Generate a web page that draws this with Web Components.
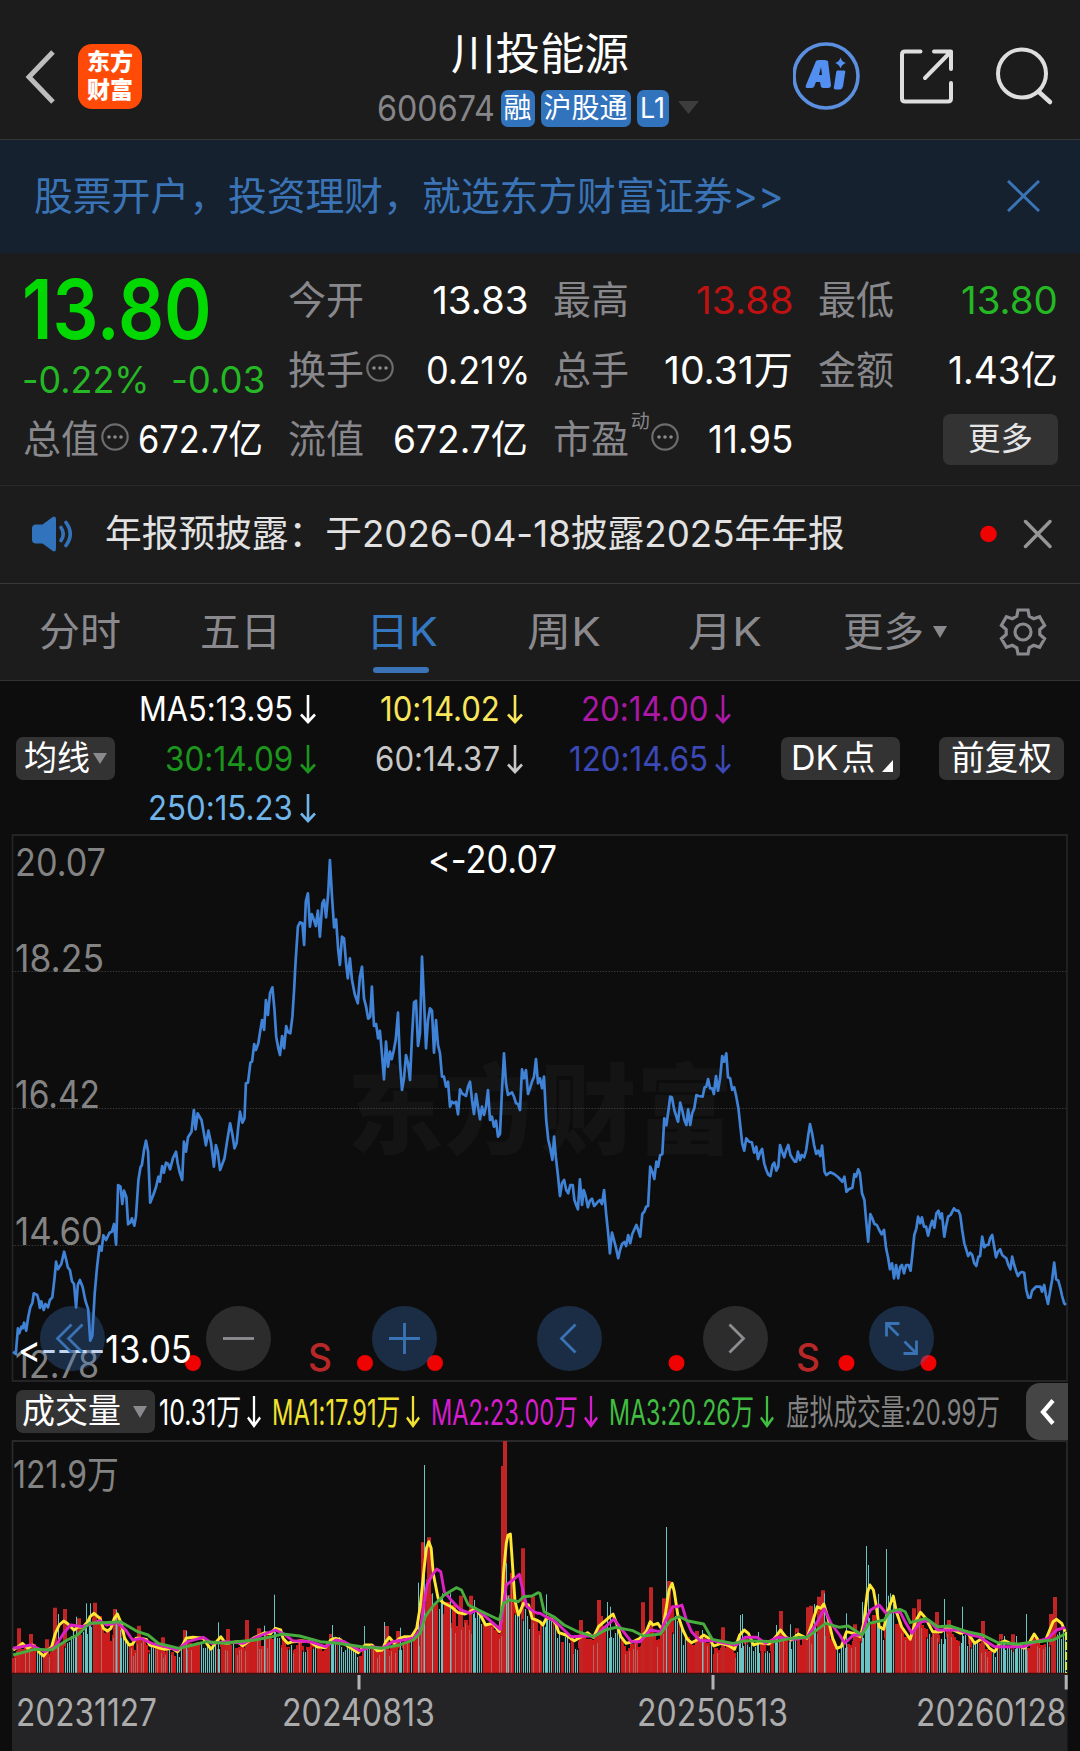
<!DOCTYPE html>
<html lang="zh-CN">
<head>
<meta charset="utf-8">
<title>川投能源 600674</title>
<style>
html,body{margin:0;background:#0d0d0d}
body{width:1080px;height:1751px;overflow:hidden;font-family:Inter,"Noto Sans CJK SC",sans-serif;font-feature-settings:"calt" 0;color:#fff}
</style>
</head>
<body>
<stock-page></stock-page>
<script>
const define=(name,html,init)=>customElements.define(name,class extends HTMLElement{
  constructor(){super();this.attachShadow({mode:'open'});}
  connectedCallback(){
    if(this.shadowRoot.firstChild)return;
    const t=document.createElement('template');
    t.innerHTML=html;
    this.shadowRoot.append(t.content.cloneNode(true));
    if(init)init.call(this,this.shadowRoot);
  }
});

/* ---------- page shell ---------- */
define('stock-page',`<style>:host{display:flex;flex-direction:column;width:1080px;height:1751px;overflow:hidden}</style>
<stock-header></stock-header>
<promo-banner></promo-banner>
<quote-panel></quote-panel>
<notice-bar></notice-bar>
<period-tabs></period-tabs>
<ma-legend></ma-legend>
<price-chart></price-chart>
<volume-legend></volume-legend>
<volume-chart></volume-chart>`);

/* ---------- header ---------- */
define('stock-header',`<style>
:host{display:flex;box-sizing:border-box;height:140px;background:#1c1c1c;border-bottom:1px solid #363638;padding:0 25px}
svg{display:block}
.l{display:flex;align-items:center;gap:22px;width:330px;height:139px;box-sizing:border-box;padding-top:14px}
.logo{width:64px;height:65px;border-radius:14px;background:#ff4a08;display:flex;flex-direction:column;align-items:center;justify-content:center;font-weight:800;font-size:23px;line-height:26px}
.m{display:flex;flex-direction:column;align-items:center;width:360px;margin-left:5px}
.t{margin-top:28px;font-size:44px;line-height:50px;height:50px}
.s{display:flex;align-items:center;gap:6px;margin-top:5px;height:50px;margin-left:-4px;color:#86868a;font-size:35px}
.b{height:37px;border-radius:7px;background:#3273be;color:#fff;display:flex;align-items:center;justify-content:center;font-size:28px}
.b t-fit{margin-top:2px}
.r{display:flex;align-items:center;width:262px;margin-left:auto;padding-top:12px;height:139px;box-sizing:border-box}
</style>
<div class="l"><svg width="31" height="54" fill="none" stroke="#bdbdbd" stroke-width="5"><path d="M28 2 4 27 28 52"/></svg>
<div class="logo"><t-fit w="46">东方</t-fit><t-fit w="46">财富</t-fit></div></div>
<div class="m"><div class="t"><t-fit w="178">川投能源</t-fit></div>
<div class="s"><t-fit w="118">600674</t-fit><span class="b" style="width:34px"><t-fit w="28">融</t-fit></span><span class="b" style="width:90px"><t-fit w="84">沪股通</t-fit></span><span class="b" style="width:32px"><t-fit w="25">L1</t-fit></span>
<svg width="22" height="16" style="margin-left:3px"><path d="M0 1h21L10.500 14z" fill="#3d3d3f"/></svg></div></div>
<div class="r"><svg width="262" height="74" fill="none" stroke="#dedede" stroke-width="4" stroke-linecap="round">
<circle cx="33" cy="37" r="32" stroke="#5b8fe0" stroke-width="3.600"/>
<g fill="#528ff0" stroke="none"><path fill-rule="evenodd" d="M23 22q1-1 3-1h6l3 1 3 24q0 3-3 3h-5l-2-1-1-5h-4l-2 5q-1 1-3 1h-4q-2 0-1-3zM26 36h3l-1-8z"/><path d="M44 31.500h7q2 0 1 3l-2 13q-1 3-3 3h-4q-3 0-2-3l2-13q0-2 1-3z"/><path d="M47.500 18.500q1.500 4.500 5.500 5.500-4 1-5.500 5.500-1.500-4.500-5.500-5.500 4-1 5.500-5.500z"/></g>
<path d="M127.500 12.500H112q-3 0-3 3v44q0 3 3 3h43q3 0 3-3V44M141 12.500h17V30M157.500 13 132 39" stroke-linejoin="round"/>
<circle cx="229" cy="34.500" r="24"/><path d="M246.500 53.500 257 63" stroke-width="4.500"/>
</svg></div>`);

define('promo-banner',`<style>
:host{display:flex;align-items:center;justify-content:space-between;box-sizing:border-box;height:113px;background:#15212f;color:#3b74b6;font-size:39px;padding:0 40px 1px 34px}
</style><t-fit w="750">股票开户，投资理财，就选东方财富证券&gt;&gt;</t-fit>
<svg width="33" height="32" stroke="#3b74b6" stroke-width="3"><path d="M1 1 32 31M32 1 1 31"/></svg>`);

/* ---------- quote ---------- */
define('more-dots',`<style>:host{display:inline-block;width:28px;height:28px;margin-top:-4px}svg{display:block}</style>
<svg width="28" height="28"><circle cx="14" cy="14" r="12.700" fill="none" stroke="#6c6c6e" stroke-width="2.200"/><g fill="#8a8a8d"><circle cx="8" cy="14" r="1.800"/><circle cx="14" cy="14" r="1.800"/><circle cx="20" cy="14" r="1.800"/></g></svg>`);

define('quote-cell',`<style>
:host{display:flex;height:69.800px;align-items:center;justify-content:space-between;color:var(--c,#fff);font-size:38.500px;font-weight:420}
.k{display:flex;align-items:center;gap:2px;color:#88888c;font-weight:400;margin-left:-1px}
</style><span class="k"><slot name="k"></slot></span><slot></slot>`);

define('quote-panel',`<style>
:host{display:flex;gap:25.600px;box-sizing:border-box;height:233px;background:#1c1c1c;border-bottom:1px solid #29292b;padding:12px 22px 0 24px}
.c{width:239.300px;flex:none}
.p{height:90px;display:flex;align-items:center;font-size:82px;font-weight:600;color:#02d902;margin-left:-2px}
.d{height:49.600px;display:flex;align-items:center;gap:21px;font-size:37px;color:#25b825;margin-left:-2px}
.m{display:flex;height:69.600px;align-items:center;justify-content:flex-end}
.m span{display:flex;align-items:center;justify-content:center;width:115px;height:51px;border-radius:7px;background:#333;color:#e6e6e6;font-size:32px}
sup{font-size:19px;line-height:20px;align-self:flex-start;margin:-4px -1px 0 0}
</style>
<div class="c"><div class="p"><t-fit w="190">13.80</t-fit></div><div class="d"><t-fit w="128">-0.22%</t-fit><t-fit w="94">-0.03</t-fit></div>
<quote-cell><t-fit slot="k" w="76">总值</t-fit><more-dots slot="k"></more-dots><t-fit w="125">672.7亿</t-fit></quote-cell></div>
<div class="c"><quote-cell><t-fit slot="k" w="76">今开</t-fit><t-fit w="96">13.83</t-fit></quote-cell>
<quote-cell><t-fit slot="k" w="76">换手</t-fit><more-dots slot="k"></more-dots><t-fit w="104" style="margin-right:-2px">0.21%</t-fit></quote-cell>
<quote-cell><t-fit slot="k" w="76">流值</t-fit><t-fit w="135">672.7亿</t-fit></quote-cell></div>
<div class="c"><quote-cell style="--c:#c01212"><t-fit slot="k" w="76">最高</t-fit><t-fit w="97">13.88</t-fit></quote-cell>
<quote-cell><t-fit slot="k" w="76">总手</t-fit><t-fit w="129">10.31万</t-fit></quote-cell>
<quote-cell><t-fit slot="k" w="76">市盈</t-fit><sup slot="k">动</sup><more-dots slot="k"></more-dots><t-fit w="85">11.95</t-fit></quote-cell></div>
<div class="c"><quote-cell style="--c:#25b825"><t-fit slot="k" w="76">最低</t-fit><t-fit w="97">13.80</t-fit></quote-cell>
<quote-cell><t-fit slot="k" w="76">金额</t-fit><t-fit w="110">1.43亿</t-fit></quote-cell>
<div class="m"><span><t-fit w="65">更多</t-fit></span></div></div>`);

/* ---------- notice ---------- */
define('notice-bar',`<style>
:host{display:flex;align-items:center;box-sizing:border-box;height:98px;background:#1c1c1c;border-bottom:1px solid #38383a;padding:0 28px 1px 32px;color:#e2e2e2;font-size:37px}
svg{display:block;flex:none}.t{margin-left:31px;flex:1}
</style>
<svg width="42" height="36" fill="none" stroke="#3273be" stroke-width="3.600" stroke-linecap="round"><path d="M4 8.500h6.500L20 1.500q4-2.500 4 2v29q0 4.500-4 2l-9.500-7H4q-4 0-4-4v-11q0-4 4-4z" fill="#3273be" stroke="none"/><path d="M29 11.500q4.500 6.500 0 13"/><path d="M34 6.500q8.500 11.500 0 23"/></svg>
<span class="t"><t-fit w="740">年报预披露：于2026-04-18披露2025年年报</t-fit></span>
<svg width="72" height="30"><circle cx="8.500" cy="15" r="8.300" fill="#ee0202"/><path d="M45.500 2.500 70 27.500M70 2.500 45.500 27.500" stroke="#969696" stroke-width="3.400" stroke-linecap="round"/></svg>`);

/* ---------- tabs ---------- */
define('period-tabs',`<style>
:host{display:flex;align-items:center;box-sizing:border-box;height:97px;background:#1c1c1c;border-bottom:1px solid #323234;padding-left:39px;color:#8a8a8e;font-size:40px}
.a{color:#3578c2;display:flex;flex-direction:column;align-items:flex-start}
.a::after{content:"";height:6px;width:56px;border-radius:3px;background:#3b74b6;margin:11px 0 -17px 7px}
svg{display:block;flex:none}
</style>
<t-fit w="82">分时</t-fit><t-fit w="81" style="margin-left:79px">五日</t-fit>
<span class="a" style="margin-left:85px"><t-fit w="72">日K</t-fit></span>
<t-fit w="74" style="margin-left:89px">周K</t-fit><t-fit w="74" style="margin-left:87px">月K</t-fit>
<t-fit w="81" style="margin-left:81px">更多</t-fit><svg width="15" height="12" style="margin-left:9px"><path d="M0 0h14L7 12z" fill="#8a8a8e"/></svg>
<svg id="g" width="50" height="50" viewBox="-25 -25 50 50" style="margin-left:50px" fill="none" stroke="#8a8a8e" stroke-width="3.200"><circle r="8"/></svg>`,function(r){
  const p=[];
  for(let i=0;i<6;i++){
    const a=i*Math.PI/3,c=Math.cos(a),s=Math.sin(a);
    for(const [x,y] of [[-6.2,-15.8],[-5,-22],[5,-22],[6.2,-15.8]])p.push((x*c-y*s).toFixed(1)+' '+(x*s+y*c).toFixed(1));
  }
  const e=document.createElementNS('http://www.w3.org/2000/svg','path');
  e.setAttribute('d','M'+p.join('L')+'z');r.getElementById('g').append(e);
});

/* ---------- moving-average legend ---------- */
define('down-arrow',`<style>:host{display:inline-block;width:16px;height:29px}svg{display:block;width:100%;height:100%}</style>
<svg viewBox="0 0 16 29" preserveAspectRatio="none" fill="none" stroke="currentColor" stroke-width="2.600"><path d="M8 0v27M1 19.500l7 7.500 7-7.500"/></svg>`);
define('ma-legend',`<style>
:host{display:flex;box-sizing:border-box;height:151px;background:#0d0d0d;padding-left:16px;align-items:center;font-size:34px}
.g{display:grid;grid-template-columns:201px 207px 208px;grid-auto-rows:49.200px;margin-top:5px}
.i{display:flex;align-items:center;justify-content:flex-end;gap:7px}
.b{display:flex;align-items:center;justify-content:center;height:43px;background:#333;border-radius:7px;margin-top:3px;gap:3px}
svg{display:block}
</style>
<span class="b" style="width:99px"><t-fit w="66">均线</t-fit><svg width="14" height="12"><path d="M0 1h14L7 12z" fill="#8a8a8e"/></svg></span>
<div class="g">
<div class="i"><t-fit w="154">MA5:13.95</t-fit><down-arrow></down-arrow></div>
<div class="i" style="color:#f8e65c"><t-fit w="120">10:14.02</t-fit><down-arrow></down-arrow></div>
<div class="i" style="color:#ab18a6"><t-fit w="127">20:14.00</t-fit><down-arrow></down-arrow></div>
<div class="i" style="color:#1b951b"><t-fit w="128">30:14.09</t-fit><down-arrow></down-arrow></div>
<div class="i" style="color:#c8c8c8"><t-fit w="125">60:14.37</t-fit><down-arrow></down-arrow></div>
<div class="i" style="color:#3b48b6"><t-fit w="139">120:14.65</t-fit><down-arrow></down-arrow></div>
<div class="i" style="color:#70b5ea"><t-fit w="145">250:15.23</t-fit><down-arrow></down-arrow></div>
</div>
<span class="b" style="width:119px;margin-left:50px"><t-fit w="84">DK&hairsp;点</t-fit><svg width="12" height="12" style="margin:16px -3px 0 3px"><path d="M12 0v12H1z" fill="#fff"/></svg></span>
<span class="b" style="width:125px;margin-left:39px"><t-fit w="101">前复权</t-fit></span>`);

/* ---------- price chart ---------- */
const PRICE_A='38 815 46 822 52 745 56 760 62 740 66 745 70 728 76 752 82 712 88 682 94 668 98 640 108 645 112 660 116 684 120 664 127 690 132 672 139 682 145 660 152 652 158 598 163 545 168 568 178 552 186 515 192 538 197 562 203 570 209 604 215 612 221 682 226 615 232 600 240 622 248 662 256 688 262 782 268 768 275 640 282 560 289 498 295 512 300 466 308 480 318 458 325 455 331 432 337 494 343 315 350 320 355 372 360 332 367 352 372 433 378 428 383 415 390 437 395 408 402 300 408 262 412 255 418 210 424 182 430 215 436 368 445 345 453 322 460 290 464 305 471 258 476 278 482 248 488 252 494 268 502 235 511 215 516 250 522 278 529 300 534 185 540 215 546 172 556 155 563 90 568 148 574 100 585 120 592 160 598 196 605 152 613 190 621 260 627 195 632 215 639 270 652 235 660 180 668 130 675 165 681 205 687 190 692 140 697 95 704 128 710 115';
const PRICE_B='714 760 720 758 727 698 732 695 738 642 743 660 750 640 756 600 761 570 767 600 772 510 778 555 784 490 791 472 797 540 802 620 808 655 813 675 819 618 825 655 831 588 836 606 843 610 849 560 854 480 858 400 865 290 871 277 878 280 883 345 888 215 894 190 900 290 905 252 911 268 917 288 923 242 929 320 936 220 941 210 947 262 953 190 958 90 964 200 970 292 976 268 982 360 987 405 993 320 999 325 1005 400 1010 445 1016 385 1022 450 1030 492 1039 520 1045 440 1051 410 1057 505 1063 530 1069 566 1075 560 1080 470 1086 588 1092 582 1098 625 1103 602 1109 670 1115 748';
const PRICE_C='138 335 144 410 150 365 155 388 161 362 167 330 174 248 180 400 186 480 192 445 198 375 204 400 210 450 216 320 222 217 228 212 234 348 240 310 246 80 252 210 258 355 264 270 270 235 276 242 282 368 288 270 294 345 300 370 306 440 312 440 318 470 324 455 330 530 336 515 342 520 348 515 354 553 360 478 366 490 378 498 384 470 390 455 396 510 402 552 408 492 414 530 420 568 426 530 432 555 438 530 444 480 450 570 456 560 462 590 468 572 474 620 480 612 486 480 492 370 498 460 504 495 516 487 522 500 528 520 534 522 540 540 546 418 552 445 558 420 564 492 570 475 576 455 582 440 588 387 594 460 600 445 606 475 612 440';
const PRICE_D='18 360 24 420 30 445 36 480 41 410 46 470 52 525 58 588 64 550 70 540 76 570 82 580 88 555 95 555 100 600 105 615 110 628 116 538 122 615 127 570 133 590 139 622 145 602 151 596 157 618 163 612 168 605 174 600 180 612 186 570 192 640 198 700 203 760 209 698 215 720 221 745 227 775 232 752 238 732 245 726 250 738 256 705 262 730 268 702 274 688 280 675 285 690 291 710 297 642 303 635 308 620 314 618 320 500 326 515 332 537 338 485 343 500 349 465 355 463 361 355 367 376 373 330 378 290 383 292 390 330 396 350 401 365 407 308 413 330 419 360 425 375 430 328 436 375 442 340 448 325 454 285 460 288 472 290 478 262 483 260 488 237 494 265 500 265 505 282 511 228 517 272 523 235 529 168 535 185 541 160 546 232 552 235 558 270 564 262 570 290 576 325 582 380 587 430 593 452 599 415 607 425 615 427 622 458 628 440 633 477 640 455 645 447 651 490 657 510 663 524 669 528 675 495 680 488 686 512 692 500 697 435 703 455 709 472 715 450 721 435 727 465 733 475 740 485 744 485 749 455 755 480 760 465 767 472 773 450 779 405 784 372 790 400 796 435 802 462 808 452 814 468 819 437 826 515 831 525 843 517 855 523 866 532 878 545 884 530 890 575 897 568 907 563 913 522 918 530 924 508 929 520 935 580 942 600 947 660 953 725 959 642 965 655 971 672 978 675 985 690 992 703 999 690 1005 745 1011 775 1016 808 1022 790 1028 835 1034 795 1040 835 1046 800 1051 795 1057 820 1063 795 1070 795 1076 812 1081 765 1087 705 1093 685 1098 650 1104 670 1109 652 1115 680 1121 680 1127 707 1133 680 1139 662 1145 683 1151 640 1157 632 1162 655 1167 640 1174 710 1179 680 1185 650 1192 645 1202 625 1208 632 1215 632 1220 645 1226 690 1232 730 1238 750 1243 768 1249 758 1255 765 1261 790 1267 798 1273 770 1278 768 1284 710 1290 742 1296 735 1302 735 1307 715 1313 705 1319 740 1324 772 1330 755 1336 748 1342 765 1348 770 1354 775 1360 795 1366 808 1371 770 1377 795 1383 815 1388 828 1394 818 1400 816 1406 818 1412 870 1418 893 1424 893 1429 872 1440 860 1453 860 1458 875 1464 855 1469 885 1475 912 1481 875 1487 840 1493 788 1499 838 1505 842 1511 865 1516 888 1522 910 1527 915';
const KX=2.9037;
const pairs=(s,ox,oy,kx,ky)=>{const n=s.split(' ').map(Number),o=[];for(let i=0;i<n.length;i+=2)o.push([ox+n[i]/kx,oy+n[i+1]/ky]);return o;};
const pts=a=>a.map(p=>p[0].toFixed(1)+','+p[1].toFixed(1)).join(' ');

define('price-chart',`<style>
:host{display:block;position:relative;height:551px;background:#0d0d0d}
svg{display:block}
text{font-size:38px;fill:#838383}
.w{fill:#fff}
.ctl{position:absolute;left:40px;top:473.500px;display:flex;gap:100.800px}
</style>
<svg width="1080" height="551" viewBox="0 832 1080 551">
<text x="347" y="1146" textLength="386" lengthAdjust="spacingAndGlyphs" style="font-size:98px;font-weight:900;fill:#141414">东方财富</text>
<path d="M12.500 835H1067V1381H12.500z" fill="none" stroke="#242426" stroke-width="1.800"/>
<path d="M12 971.500H1067M12 1108.500H1067M12 1245.500H1067" stroke="#3a3a3a" stroke-width="1" stroke-dasharray="1.400 1.400"/>
<text x="15" y="875.500" textLength="91" lengthAdjust="spacingAndGlyphs">20.07</text>
<text x="15" y="972" textLength="89" lengthAdjust="spacingAndGlyphs">18.25</text>
<text x="15" y="1108" textLength="85" lengthAdjust="spacingAndGlyphs">16.42</text>
<text x="15" y="1245" textLength="88" lengthAdjust="spacingAndGlyphs">14.60</text>
<text x="15" y="1378" textLength="84" lengthAdjust="spacingAndGlyphs">12.78</text>
<g fill="#ee0202"><circle cx="193" cy="1363" r="8"/><circle cx="365" cy="1363" r="8"/><circle cx="435" cy="1363" r="8"/><circle cx="676.500" cy="1363" r="8"/><circle cx="846.500" cy="1363" r="8"/><circle cx="928.500" cy="1363" r="8"/></g>
<text x="308" y="1371" style="fill:#b82828;font-weight:500" textLength="24" lengthAdjust="spacingAndGlyphs">S</text><text x="796" y="1371" style="fill:#b82828;font-weight:500" textLength="24" lengthAdjust="spacingAndGlyphs">S</text>
<polyline id="l" fill="none" stroke="#3f82d6" stroke-width="2.700" stroke-linejoin="round"/>
<text class="w" x="428" y="872.500" textLength="129" lengthAdjust="spacingAndGlyphs">&lt;-20.07</text>
<text class="w" x="18" y="1363" textLength="174" lengthAdjust="spacingAndGlyphs">&lt;----13.05</text>
</svg>
<div class="ctl">
<round-button><path d="m-1-14-14 14 14 14M10-14-4 0l14 14"/></round-button>
<round-button gray><path d="M-15.500 0h31"/></round-button>
<round-button><path d="M-15.500 0h31M0-15.500v31"/></round-button>
<round-button><path d="M6-14-8 0 6 14"/></round-button>
<round-button gray><path d="M-6-14 8 0-6 14"/></round-button>
<round-button><path d="M-15-2v-13h13M-14-14-3-3M2 15h13V2M14 14 3 3"/></round-button>
</div>`,function(r){
  const line=[...pairs(PRICE_A,0,1080,KX,3),...pairs(PRICE_B,0,830,KX,3),...pairs(PRICE_C,340,930,3,3),...pairs(PRICE_D,540,1000,KX,3)];
  r.getElementById('l').setAttribute('points',pts(line));
});

customElements.define('round-button',class extends HTMLElement{
  connectedCallback(){
    if(this.shadowRoot)return;
    const g=this.hasAttribute('gray');
    this.attachShadow({mode:'open'}).innerHTML=`<style>:host{display:block;width:65px;height:65px;border-radius:50%;background:${g?'rgba(170,170,170,.2)':'rgba(58,119,196,.3)'}}svg{display:block}</style><svg width="65" height="65" viewBox="-32.500 -32.500 65 65" fill="none" stroke="${g?'#8e8e92':'#3a73b5'}" stroke-width="2.800">${this.innerHTML}</svg>`;
  }
});

/* ---------- volume legend ---------- */
define('volume-legend',`<style>
:host{display:flex;align-items:center;box-sizing:border-box;height:57px;background:#0d0d0d;padding-left:16px;font-size:35px}
.b{display:flex;align-items:center;justify-content:space-between;box-sizing:border-box;width:139px;height:43px;background:#333;border-radius:7px;padding:0 8px 0 6px;margin-right:4px;font-size:34px}
svg{display:block}down-arrow{margin:0 11.500px 0 5.500px;width:14px;height:32px}
.e{display:flex;align-items:center;justify-content:center;width:42px;height:57px;border-radius:14px 0 0 14px;background:#454545;margin-left:auto;margin-right:12px}
</style>
<span class="b"><t-fit w="99">成交量</t-fit><svg width="14" height="12"><path d="M0 0h14L7 12z" fill="#8a8a8e"/></svg></span>
<t-fit w="82">10.31万</t-fit><down-arrow></down-arrow>
<span style="color:#f0e130;display:contents"><t-fit w="128">MA1:17.91万</t-fit><down-arrow></down-arrow></span>
<span style="color:#d61dce;display:contents"><t-fit w="147">MA2:23.00万</t-fit><down-arrow></down-arrow></span>
<span style="color:#41bd41;display:contents"><t-fit w="145">MA3:20.26万</t-fit><down-arrow></down-arrow></span>
<span style="color:#838383;display:contents"><t-fit w="214" style="margin-left:1px">虚拟成交量:20.99万</t-fit></span>
<span class="e"><svg width="15" height="26" fill="none" stroke="#fff" stroke-width="4.200"><path d="M13 1.500 3 13l10 11.500"/></svg></span>`);

/* ---------- volume chart ---------- */
const YEL=['38 660 50 652 65 640 80 655 95 645 105 655 115 668 127 678 140 660 150 650 160 612 172 585 185 573 195 580 205 590 215 600 228 590 240 592 255 575 262 560 273 550 290 565 300 595 312 603 322 595 332 565 341 552 352 580 362 625 375 645 385 642 395 625 410 625 425 628 435 645 450 650 465 655 480 658 500 655 515 665 528 650 540 625 560 622 590 625 600 640 613 658 625 640 641 620 655 640 670 638 690 635 705 648 720 635 740 622 755 615 768 608 785 612 800 595 815 600 822 625 835 640 850 635 880 633 900 635 920 650 945 653 960 630 975 625 990 630 1005 645 1020 655 1040 668 1060 645 1080 645 1095 662 1110 660 1120 635 1130 622 1145 640 1160 625 1175 620 1195 620 1210 595 1220 530 1230 430 1238 355 1245 335 1252 355 1258 430 1272 505 1290 520 1310 530 1330 548 1350 552 1365 545 1380 535 1395 555 1410 585 1430 580 1450 605 1456 560 1462 430 1470 340 1475 315 1482 312 1488 400 1495 510 1505 555 1512 540 1520 520 1535 525 1545 565 1562 572',
'0 575 8 585 20 562 35 568 45 580 55 608 75 615 100 632 120 620 138 608 155 622 170 590 190 572 203 560 212 552 222 580 235 620 250 640 270 635 290 625 308 605 320 575 328 585 342 580 355 600 365 545 375 480 384 460 390 485 400 555 415 600 428 628 440 638 460 628 475 615 490 625 505 648 525 640 545 645 565 658 580 615 593 600 605 610 620 645 640 638 665 642 685 620 698 600 715 622 730 630 750 612 775 625 790 580 805 530 815 535 824 522 835 560 850 625 862 655 875 650 890 605 910 610 930 620 940 580 950 490 958 465 968 480 975 520 985 590 998 598 1008 550 1018 520 1026 498 1035 545 1050 590 1075 628 1090 575 1105 547 1120 565 1140 605 1165 605 1180 595 1200 600 1220 610 1240 605 1262 640 1285 625 1305 655 1320 665 1335 640 1350 632 1370 642 1390 645 1405 655 1420 640 1435 612 1450 635 1468 630 1480 600 1490 575 1500 568 1515 580 1525 605'];
const MAG=['38 655 90 645 130 665 160 650 185 610 205 585 240 590 270 580 290 572 310 585 341 578 365 600 385 630 410 625 440 640 480 650 515 660 545 635 590 622 615 640 660 635 705 640 760 615 800 600 825 612 850 632 900 635 945 650 975 630 1000 635 1045 662 1080 650 1110 655 1140 635 1200 625 1220 600 1230 530 1240 465 1255 435 1268 417 1280 425 1290 485 1310 510 1335 538 1365 550 1385 540 1410 560 1452 598 1460 540 1470 465 1490 450 1508 433 1520 490 1530 530 1550 545 1562 550',
'0 550 20 562 40 572 60 590 90 620 130 618 160 618 185 595 215 567 235 595 265 635 290 635 320 600 350 605 365 570 385 530 400 530 412 525 425 570 440 605 465 632 500 632 540 640 570 645 595 622 630 622 655 640 690 622 740 628 775 622 800 585 826 537 845 580 870 615 885 640 910 615 935 615 950 560 960 540 985 525 1005 550 1025 545 1045 545 1060 575 1080 610 1105 575 1130 572 1155 600 1190 600 1215 600 1250 615 1275 620 1320 650 1350 650 1405 650 1440 635 1475 625 1500 600 1525 592'];
const GRN=['38 675 100 658 150 660 195 630 225 615 260 580 300 578 350 575 400 605 430 615 460 640 520 655 560 645 600 635 650 640 690 635 740 630 790 620 820 612 870 618 930 635 980 640 1050 650 1110 655 1160 645 1200 630 1220 610 1235 560 1260 525 1290 495 1325 473 1340 480 1360 525 1400 545 1450 570 1462 520 1480 510 1505 515 1520 500 1545 498 1562 488',
'0 490 12 545 40 560 70 585 110 605 155 620 190 600 220 592 270 602 300 618 350 612 380 570 405 560 430 573 475 582 500 628 560 640 600 632 680 635 730 625 775 622 830 580 870 592 895 588 935 615 955 580 1000 570 1015 545 1045 538 1060 545 1075 578 1120 565 1155 590 1190 588 1240 605 1285 615 1330 638 1390 642 1440 635 1490 630 1525 612'];
/* down-day runs and single spikes, [panel offset, list] */
const DOWN=[[0,'105 121 190 222 237 266 348 372 430 446 487 496 515 532 580 626 632 642 673 681 795 816 835 851 880 890 910 918 960 976 985 1042 1057 1076 1158 1170 1190 1200 1273 1286 1373 1402 1493 1512 1520 1542'],
[540,'8 38 45 62 74 86 98 112 194 231 384 402 408 427 494 502 568 592 600 642 650 672 680 691 724 746 795 802 862 892 929 957 978 1002 1004 1031 1124 1136 1158 1182 1222 1242 1248 1272 1313 1332 1340 1412 1468 1482 1498 1530']];
const TALL_RED=[[0,'53 595 88 612 135 628 157 533 186 537 227 565 274 518 332 537 402 587 471 622 535 600 662 597 715 570 750 595 960 612 1122 588 1153 603 1226 337 1244 322 1337 497 1366 497 1458 108 1465 33 1517 355 1547 500'],
[540,'117 570 169 510 176 558 297 517 320 472 360 505 373 453 454 603 529 592 698 543 745 595 778 532 785 527 808 500 820 481 912 583 1098 508 1085 535 1151 546 1186 570 1284 573 1337 612 1371 613 1482 552 1493 501']];
const TALL_CYAN=[[0,'169 552 222 560 251 520 262 520 350 600 338 540 541 603 634 577 767 587 797 494 965 585 1058 588 1116 576 1162 593 1215 458 1232 105 1255 490 1307 490 1284 490 1377 510 1476 498 1470 400'],
[540,'18 493 197 516 204 530 367 291 472 600 583 555 588 552 634 606 686 585 727 583 797 522 826 490 890 550 936 516 948 348 954 405 982 492 1006 357 1012 497 1018 490 1174 507 1226 530 1412 552 1348 618 1383 618']];

define('volume-chart',`<style>
:host{display:block;height:311px;background:#0d0d0d}svg{display:block}
text{font-size:38px;fill:#acacac}
</style>
<svg width="1080" height="311" viewBox="0 1440 1080 311">
<path d="M12 1674H1067.500V1751H12z" fill="#242426"/>
<path d="M12.500 1674V1441H1067V1674" fill="none" stroke="#29292b" stroke-width="1.800"/>
<g id="bars"></g>
<path d="M12 1673.500H1067" stroke="#3b1012" stroke-width="1.600"/>
<g id="lines" fill="none" stroke-width="2.900" stroke-linejoin="round"></g>
<path d="M1066 1632V1673" stroke="#d7ee38" stroke-width="2" stroke-dasharray="8 2"/>
<text x="13" y="1488" textLength="106" lengthAdjust="spacingAndGlyphs" style="fill:#838383">121.9万</text>
<path d="M359 1675v14.500M713 1675v14.500M1066.200 1675v14.500" stroke="#b4b4b4" stroke-width="3"/>
<text x="16" y="1726" textLength="141" lengthAdjust="spacingAndGlyphs">20231127</text>
<text x="282" y="1726" textLength="153" lengthAdjust="spacingAndGlyphs">20240813</text>
<text x="637" y="1726" textLength="151" lengthAdjust="spacingAndGlyphs">20250513</text>
<text x="916" y="1726" textLength="150.500" lengthAdjust="spacingAndGlyphs">20260128</text>
</svg>`,function(r){
  const Y0=1430,BASE=1673;
  const join=a=>[...pairs(a[0],0,Y0,KX,3),...pairs(a[1],540,Y0,KX,3)];
  const at=(a,x)=>{let i=1;while(i<a.length-1&&a[i][0]<x)i++;const [x0,y0]=a[i-1],[x1,y1]=a[i];return y0+(y1-y0)*Math.max(0,Math.min(1,(x-x0)/(x1-x0)));};
  const yel=join(YEL),grn=join(GRN);
  const down=[];for(const [o,s] of DOWN){const n=s.split(' ').map(Number);for(let i=0;i<n.length;i+=2)down.push([o+n[i]/KX,o+n[i+1]/KX]);}
  const red=TALL_RED.flatMap(([o,s])=>pairs(s,o,Y0,KX,3)),cyan=TALL_CYAN.flatMap(([o,s])=>pairs(s,o,Y0,KX,3));
  let seed=7;const rnd=()=>(seed=(seed*16807)%2147483647)/2147483647;
  let R='',C='',G='',D='';
  for(let i=0;i<527;i++){
    const x=13.5+i*2;
    const env=Math.max(at(yel,x),Math.min(at(grn,x),at(yel,x)+30)-4);
    const top=Math.min(BASE-12,BASE-(BASE-env)*(.66+.42*rnd()));
    const t=Math.round(top);
    if(down.some(d=>x>=d[0]&&x<=d[1])){C+=`M${x} ${BASE}V${t}`;D+=`M${x-1} ${BASE}V${t-2}M${x+1} ${BASE}V${t-2}`;}
    else{
      R+=`M${x-1.5} ${BASE}V${t}h4V${BASE}z`;
      if(rnd()<.3)G+=`M${x} ${BASE}V${t+3}`;
    }
  }
  let TR='',TC='';
  const snap=x=>Math.floor(x)+.5;
  for(const [x,y] of red)TR+=`M${snap(x)-1.5} ${BASE}V${y.toFixed(1)}h4V${BASE}z`;
  for(const [x,y] of cyan)TC+=`M${snap(x)} ${BASE}V${y.toFixed(1)}`;
  r.getElementById('bars').innerHTML=`<path d="${R}" fill="#ca1c1c"/><path d="${TR}" fill="#c02424"/><path d="${D}" stroke="#1a1a1a"/><path d="${G}" stroke="#b56464" fill="none"/><path d="${C}${TC}" stroke="#6ac4c4" stroke-width="1" fill="none"/>`;
  r.getElementById('lines').innerHTML=[[YEL,'#ffe733'],[MAG,'#dc22c4'],[GRN,'#48ad3e']].map(([a,c])=>`<polyline points="${pts(join(a))}" stroke="${c}"/>`).join('');
});

/* One line of text set to an exact width, scaled horizontally to fill it. Defined last so its context is styled. */
customElements.define('t-fit',class extends HTMLElement{
  connectedCallback(){
    if(this.shadowRoot)return;
    const w=+this.getAttribute('w');
    this.attachShadow({mode:'open'}).innerHTML=`<style>:host{display:inline-block;flex:none;width:${w}px;white-space:nowrap;line-height:1.2}span{display:inline-block;transform-origin:0 50%}</style><span><slot></slot></span>`;
    const s=this.shadowRoot.querySelector('span');
    s.style.transform=`scaleX(${w/s.offsetWidth})`;
  }
});
</script>
</body>
</html>
